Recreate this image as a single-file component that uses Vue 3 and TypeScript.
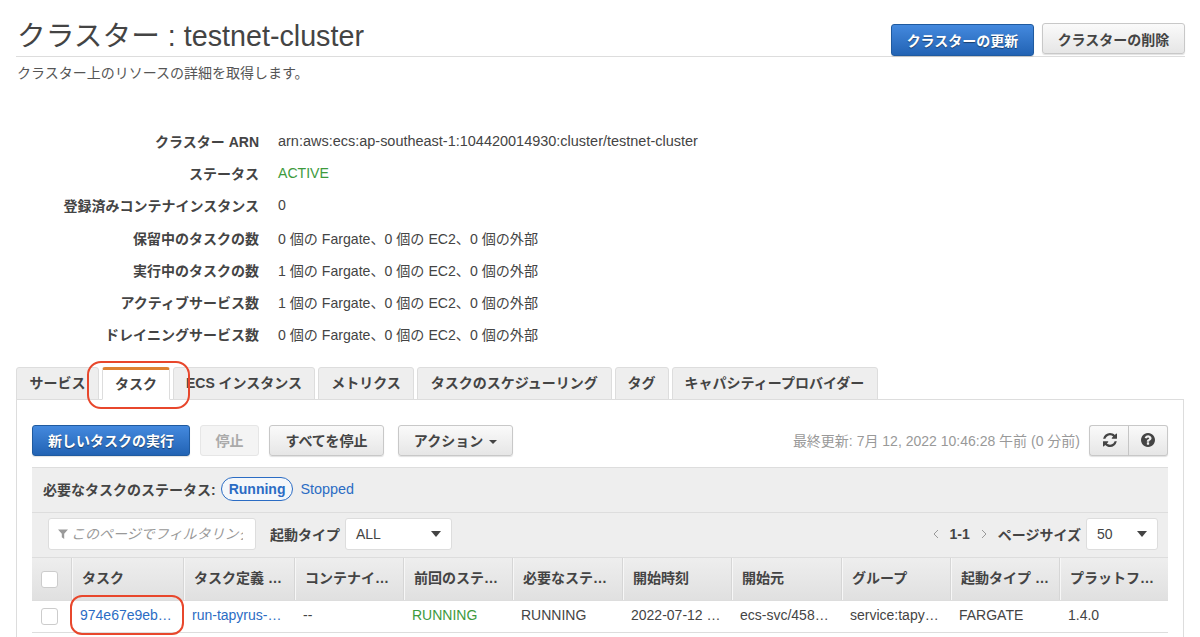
<script setup lang="ts">
const details: { label: string; value: string; ok?: boolean; wide?: boolean }[] = [
  { label: 'クラスター ARN', value: 'arn:aws:ecs:ap-southeast-1:104420014930:cluster/testnet-cluster', wide: true },
  { label: 'ステータス', value: 'ACTIVE', ok: true },
  { label: '登録済みコンテナインスタンス', value: '0' },
  { label: '保留中のタスクの数', value: '0 個の Fargate、0 個の EC2、0 個の外部' },
  { label: '実行中のタスクの数', value: '1 個の Fargate、0 個の EC2、0 個の外部' },
  { label: 'アクティブサービス数', value: '1 個の Fargate、0 個の EC2、0 個の外部' },
  { label: 'ドレイニングサービス数', value: '0 個の Fargate、0 個の EC2、0 個の外部' },
]
const tabs = [
  { name: 'サービス', w: 83 },
  { name: 'タスク', w: 68, active: true },
  { name: 'ECS インスタンス', w: 142 },
  { name: 'メトリクス', w: 96 },
  { name: 'タスクのスケジューリング', w: 194.5 },
  { name: 'タグ', w: 54 },
  { name: 'キャパシティープロバイダー', w: 206 },
]
const columns = [
  { head: 'タスク', w: 112, cell: '974e67e9eb…', cls: 'link' },
  { head: 'タスク定義 …', w: 111, cell: 'run-tapyrus-…', cls: 'link' },
  { head: 'コンテナイ…', w: 109, cell: '--', cls: '' },
  { head: '前回のステ…', w: 109, cell: 'RUNNING', cls: 'green' },
  { head: '必要なステ…', w: 110, cell: 'RUNNING', cls: '' },
  { head: '開始時刻', w: 109, cell: '2022-07-12 …', cls: '' },
  { head: '開始元', w: 110, cell: 'ecs-svc/458…', cls: '' },
  { head: 'グループ', w: 109, cell: 'service:tapy…', cls: '' },
  { head: '起動タイプ …', w: 109, cell: 'FARGATE', cls: '' },
  { head: 'プラットフ…', w: 108, cell: '1.4.0', cls: '' },
]
</script>

<template>
  <div class="page">
    <header class="title-bar">
      <h1>クラスター : testnet-cluster</h1>
      <div class="title-actions">
        <button class="btn primary title-btn">クラスターの更新</button>
        <button class="btn title-btn del">クラスターの削除</button>
      </div>
    </header>
    <p class="subtitle">クラスター上のリソースの詳細を取得します。</p>

    <dl class="details">
      <div v-for="d in details" :key="d.label" class="detail">
        <dt>{{ d.label }}</dt>
        <dd :class="{ green: d.ok, wide: d.wide }">{{ d.value }}</dd>
      </div>
    </dl>

    <nav class="tabs">
      <div
        v-for="t in tabs"
        :key="t.name"
        class="tab"
        :class="{ active: t.active }"
        :style="{ width: t.w + 'px' }"
      >{{ t.name }}</div>
    </nav>

    <section class="panel">
      <div class="toolbar">
        <button class="btn primary run">新しいタスクの実行</button>
        <button class="btn disabled stop">停止</button>
        <button class="btn stopall">すべてを停止</button>
        <button class="btn action">アクション<i class="caret small"></i></button>
        <span class="updated">最終更新: 7月 12, 2022 10:46:28 午前 (0 分前)</span>
        <div class="btn-group">
          <button class="btn icon">
            <svg viewBox="128 128 1536 1536" width="14" height="14"><path fill="#444" d="M1639 1056q0 5-1 7-64 268-268 434.500t-478 166.500q-146 0-282.500-55t-243.500-157l-129 129q-19 19-45 19t-45-19-19-45v-448q0-26 19-45t45-19h448q26 0 45 19t19 45-19 45l-137 137q71 66 161 102t187 36q134 0 250-65t186-179q11-17 53-117 8-23 30-23h192q13 0 22.500 9.500t9.500 22.500zm25-800v448q0 26-19 45t-45 19h-448q-26 0-45-19t-19-45 19-45l138-138q-148-137-349-137-134 0-250 65t-186 179q-11 17-53 117-8 23-30 23h-199q-13 0-22.500-9.500t-9.500-22.500v-7q65-268 270-434.500t480-166.500q146 0 284 55.500t245 156.500l130-129q19-19 45-19t45 19 19 45z"/></svg>
          </button>
          <button class="btn icon">
            <svg viewBox="0 128 1536 1536" width="14" height="14"><path fill="#444" d="M896 1376v-192q0-14-9-23t-23-9h-192q-14 0-23 9t-9 23v192q0 14 9 23t23 9h192q14 0 23-9t9-23zm256-672q0-88-55.500-163t-138.500-116-170-41q-243 0-371 213-15 24 8 42l132 100q7 6 19 6 16 0 25-12 53-68 86-92 34-24 86-24 48 0 85.500 26t37.500 59q0 38-20 61t-68 45q-63 28-115.500 86.500t-52.500 125.500v36q0 14 9 23t23 9h192q14 0 23-9t9-23q0-19 21.500-49.500t54.500-49.500q32-18 49-28.500t46-35 44.500-48 28-60.500 12.500-81zm384 192q0 209-103 385.500t-279.500 279.500-385.500 103-385.500-103-279.500-279.500-103-385.500 103-385.500 279.500-279.500 385.500-103 385.500 103 279.500 279.500 103 385.500z"/></svg>
          </button>
        </div>
      </div>

      <div class="status-row">
        <b>必要なタスクのステータス:</b>
        <span class="pill">Running</span>
        <span class="link stopped">Stopped</span>
      </div>

      <div class="filter-row">
        <div class="filter-input">
          <svg viewBox="0 0 10 10" width="10" height="10"><path fill="#9a9a9a" d="M0 .5h10L6.200 4.800V10L3.800 8.200V4.800z"/></svg>
          <input class="placeholder" placeholder="このページでフィルタリング" />
        </div>
        <b class="launch">起動タイプ</b>
        <div class="select launch-select">ALL<i class="caret"></i></div>
        <div class="pager">
          <svg class="chev" viewBox="0 0 6 10" width="6" height="10"><path fill="none" stroke="#999" d="M5 1 1 5l4 4"/></svg>
          <b class="range">1-1</b>
          <svg class="chev" viewBox="0 0 6 10" width="6" height="10"><path fill="none" stroke="#999" d="m1 1 4 4-4 4"/></svg>
          <b class="psize">ページサイズ</b>
          <div class="select size-select">50<i class="caret"></i></div>
        </div>
      </div>

      <div class="table">
        <div class="row head">
          <div class="check-cell"><span class="check"></span></div>
          <div v-for="c in columns" :key="c.head" class="cell hcell" :style="{ width: c.w + 'px' }">{{ c.head }}</div>
        </div>
        <div class="row body">
          <div class="check-cell"><span class="check"></span></div>
          <div v-for="c in columns" :key="c.head" class="cell" :class="c.cls" :style="{ width: c.w + 'px' }">{{ c.cell }}</div>
        </div>
      </div>
    </section>

    <div class="mark mark-tab"></div>
    <div class="mark mark-row"></div>
  </div>
</template>

<style>
html, body { margin: 0; background: #fff; overflow: hidden; }
</style>

<style scoped>
.page {
  position: relative;
  width: 1200px;
  height: 637px;
  overflow: hidden;
  padding: 0 15px 0 16px;
  box-sizing: border-box;
  font-family: "Liberation Sans", "Noto Sans CJK JP", sans-serif;
  font-size: 14px;
  color: #444;
  background: #fff;
}
.title-bar {
  height: 57px;
  box-sizing: border-box;
  border-bottom: 1px solid #ddd;
  display: flex;
  justify-content: space-between;
  align-items: flex-end;
}
h1 {
  margin: 0 0 0 1px;
  font-size: 28.7px;
  line-height: 40px;
  font-weight: 400;
  color: #444;
}
.title-actions { display: flex; gap: 8px; align-items: flex-start; height: 33px; position: relative; top: 1px; }
.btn {
  font-family: inherit;
  font-size: 14px;
  font-weight: 700;
  color: #444;
  height: 31px;
  border: 1px solid #c8c8c8;
  border-radius: 3px;
  background: linear-gradient(#fafafa, #e6e6e6);
  box-shadow: 0 1px 1px rgba(0, 0, 0, .12);
  padding: 0;
  box-sizing: border-box;
}
.btn.primary {
  color: #fff;
  border-color: #1f5a9f;
  background: linear-gradient(#4489de, #2263b4);
  text-shadow: 0 1px 1px rgba(0, 0, 0, .45);
}
.title-btn { width: 143px; height: 32px; }
.del { width: 143px; height: 31px; margin-top: -1px; }
.subtitle { margin: 8px 0 0 1px; font-size: 14px; line-height: 16px; color: #555; }

.details { margin: 44px 0 0; height: 226px; }
.detail { display: flex; height: 32.2px; align-items: center; }
dt { width: 243px; text-align: right; font-weight: 700; }
dd { margin: 0 0 0 19px; font-size: 14.1px; }
dd.wide { font-size: 14.47px; }
.green { color: #3d9a3d; }

.tabs { display: flex; gap: 3px; height: 33px; margin-top: 16px; position: relative; z-index: 1; }
.tab {
  box-sizing: border-box;
  height: 33px;
  border: 1px solid #ddd;
  border-radius: 3px 3px 0 0;
  background: #eee;
  font-weight: 700;
  line-height: 30px;
  text-align: center;
  white-space: nowrap;
}
.tab.active {
  background: #fff;
  border-top: 3px solid #dd8233;
  border-bottom-color: #fff;
  line-height: 28px;
}
.panel {
  border: 1px solid #ddd;
  border-width: 1px 1px 0;
  margin: -1px 1px 0 0;
  height: 240px;
  padding: 0 15px;
  box-sizing: border-box;
}
.toolbar { display: flex; align-items: center; height: 68px; border-bottom: 1px solid #ddd; padding-top: 13px; box-sizing: border-box; }
.run { width: 158px; }
.stop { width: 59px; margin-left: 10px; }
.stopall { width: 115px; margin-left: 10px; }
.action { width: 115px; margin-left: 14px; }
.disabled { color: #aaa; background: #f4f4f4; border-color: #e6e6e6; box-shadow: none; }
.updated { margin-left: auto; font-size: 14px; color: #999; margin-right: 9px; white-space: nowrap; }
.btn-group { display: flex; }
.icon { width: 40px; display: flex; align-items: center; justify-content: center; }
.icon:first-child { border-radius: 3px 0 0 3px; border-right: 0; box-shadow: 0 1px 1px rgba(0,0,0,.12), inset -1px 0 0 #c8c8c8; }
.icon:last-child { border-radius: 0 3px 3px 0; border-left: 0; width: 39px; }

.status-row {
  display: flex;
  align-items: center;
  height: 45px;
  padding: 0 0 2px 11px;
  background: #eee;
  border-bottom: 1px solid #ddd;
  box-sizing: border-box;
}
.pill {
  margin-left: 5px;
  height: 24px;
  line-height: 22px;
  box-sizing: border-box;
  border: 1px solid #2b6cc4;
  border-radius: 12px;
  padding: 0 7px;
  color: #2b6cc4;
  font-weight: 700;
  background: #f4f7fa;
}
.link { color: #2b6cc4; }
.stopped { margin-left: 7px; font-size: 14.4px; }

.filter-row {
  display: flex;
  align-items: center;
  height: 45px;
  background: #eee;
  padding: 0 10px 2px 16px;
  box-sizing: border-box;
  border-bottom: 1px solid #ddd;
}
.filter-input {
  width: 208px;
  height: 32px;
  background: #fff;
  border: 1px solid #ddd;
  border-radius: 3px;
  box-sizing: border-box;
  display: flex;
  align-items: center;
  gap: 3px;
  padding: 0 9px;
  overflow: hidden;
}
.filter-input svg { flex: none; }
.placeholder {
  flex: none;
  width: 172px;
  border: 0;
  outline: 0;
  padding: 0;
  background: transparent;
  font-family: inherit;
  font-size: 14px;
  font-style: italic;
}
.placeholder::placeholder { color: #999; opacity: 1; }
.launch { margin-left: 14px; white-space: nowrap; }
.select {
  position: relative;
  height: 32px;
  line-height: 30px;
  background: #fff;
  border: 1px solid #ddd;
  border-radius: 3px;
  box-sizing: border-box;
  padding-left: 10px;
}
.launch-select { width: 107px; margin-left: 5px; }
.size-select { width: 72px; margin-left: 5px; }
.caret {
  position: absolute;
  right: 10px;
  top: 12px;
  width: 0;
  height: 0;
  border-left: 5.500px solid transparent;
  border-right: 5.500px solid transparent;
  border-top: 6px solid #444;
}
.caret.small {
  position: static;
  display: inline-block;
  margin-left: 6px;
  vertical-align: middle;
  border-left-width: 4px;
  border-right-width: 4px;
  border-top-width: 4px;
}
.pager { margin-left: auto; display: flex; align-items: center; }
.chev { flex: none; }
.range { margin: 0 11px 0 10px; }
.psize { margin-left: 11px; }

.row { display: flex; box-sizing: border-box; }
.head {
  height: 43px;
  background: linear-gradient(#eee, #e0e0e0);
  border-bottom: 1px solid #ddd;
}
.body { height: 32px; border-bottom: 1px solid #ddd; background: #fff; }
.check-cell { width: 40px; flex: none; display: flex; align-items: center; justify-content: center; box-sizing: border-box; padding-right: 5px; }
.check {
  width: 17px;
  height: 17px;
  background: #fff;
  border: 1px solid #ccc;
  border-radius: 3px;
  box-sizing: border-box;
}
.cell {
  flex: none;
  box-sizing: border-box;
  padding-left: 8px;
  line-height: 29px;
  white-space: nowrap;
  overflow: hidden;
}
.hcell {
  font-weight: 700;
  padding-left: 9px;
  line-height: 41px;
  border-left: 1px solid #f7f7f7;
  box-shadow: -1px 0 0 #d6d6d6;
}

.mark {
  position: absolute;
  box-sizing: border-box;
  border: 2px solid #e8472c;
  pointer-events: none;
  z-index: 5;
}
.mark-tab { left: 87px; top: 361px; width: 103px; height: 48px; border-radius: 14px; }
.mark-row { left: 70px; top: 595px; width: 114px; height: 40px; border-radius: 12px; }
</style>
